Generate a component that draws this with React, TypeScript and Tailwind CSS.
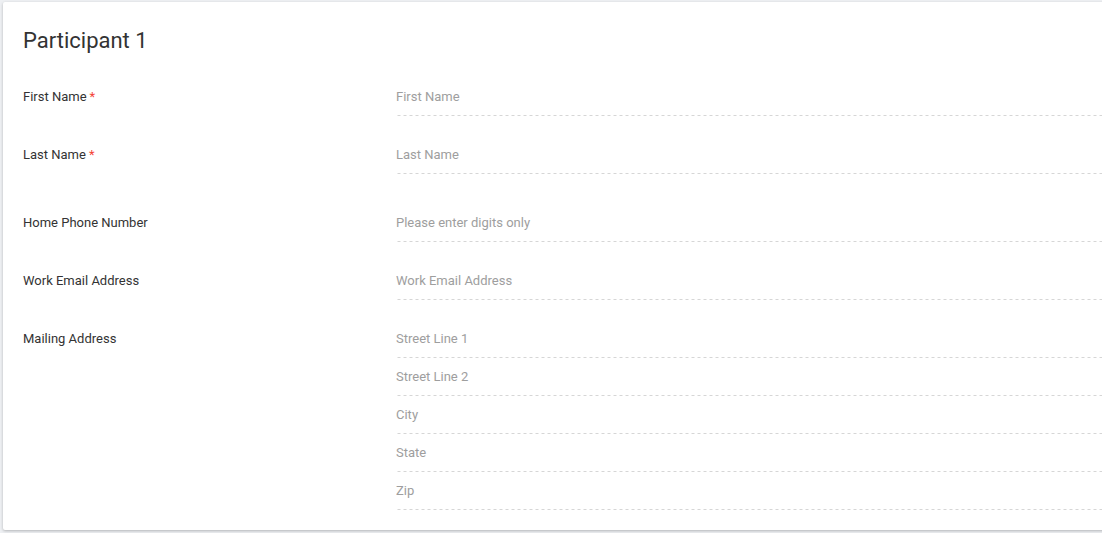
import React from 'react';

const font = { fontFamily: 'Roboto, "Liberation Sans", sans-serif' };

type Field = { label: string; required?: boolean; inputs: string[]; extraTop?: boolean };

const fields: Field[] = [
  { label: 'First Name', required: true, inputs: ['First Name'] },
  { label: 'Last Name', required: true, inputs: ['Last Name'] },
  { label: 'Home Phone Number', inputs: ['Please enter digits only'], extraTop: true },
  { label: 'Work Email Address', inputs: ['Work Email Address'] },
  { label: 'Mailing Address', inputs: ['Street Line 1', 'Street Line 2', 'City', 'State', 'Zip'] },
];

export default function App() {
  return (
    <div className="min-h-screen overflow-hidden bg-[#eef0f3] pt-[2px] pl-[3px]" style={font}>
      <div className="w-[1130px] rounded-[2px] bg-white px-5 pt-[26px] pb-[20px] shadow-[0_1px_3px_rgba(0,0,0,0.25)]">
        <h1 className="text-[22px] leading-[26px] font-normal text-[#333]">Participant 1</h1>

        <div className="mt-[23px] flex flex-col gap-[19px]">
          {fields.map((f) => (
            <div key={f.label} className={`flex ${f.extraTop ? 'mt-[10px]' : ''}`}>
              <div className="flex h-[39px] w-[373px] shrink-0 items-center text-[13px] text-[#333]">
                {f.label}
                {f.required && <span className="ml-[3px] text-[#f44336]">*</span>}
              </div>
              <div className="flex flex-1 flex-col">
                {f.inputs.map((p, i) => (
                  <input
                    key={p}
                    placeholder={p}
                    className={`${i === 0 ? 'h-[39px]' : 'h-[38px]'} w-full bg-transparent bg-[linear-gradient(to_right,#d6d6d6_50%,transparent_50%)] bg-[length:6px_1px] bg-bottom bg-repeat-x pb-px text-[13px] text-[#333] outline-none placeholder:text-[#9e9e9e]`}
                  />
                ))}
              </div>
            </div>
          ))}
        </div>
      </div>
    </div>
  );
}
